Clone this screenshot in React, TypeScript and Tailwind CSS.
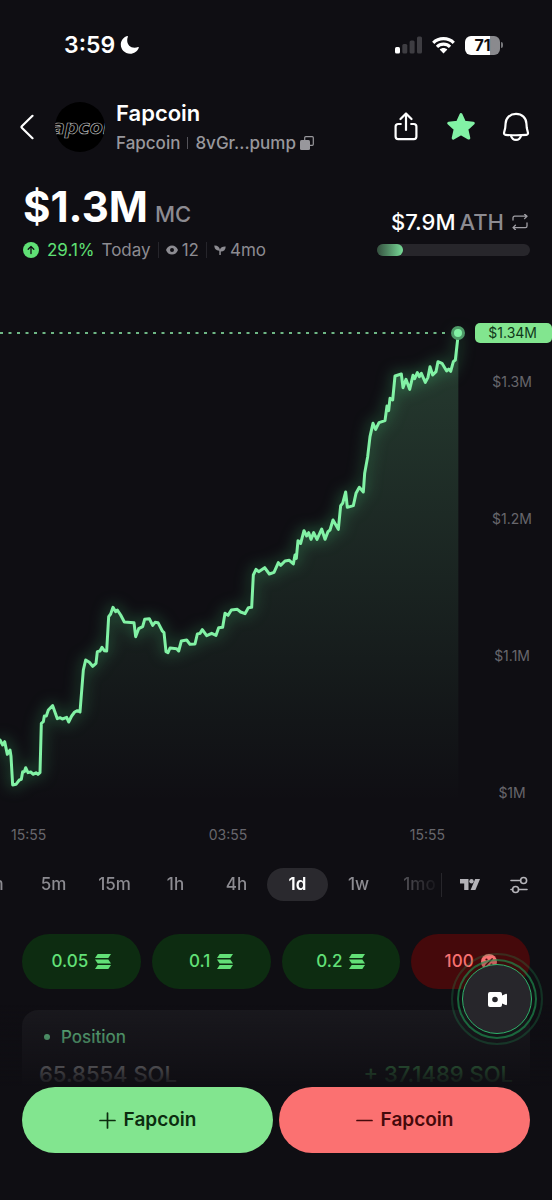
import React, { useState } from "react";

// one point per sample, viewBox units of the chart (1377 x 1440)
const POINTS: [number, number][] = [
  [0, 1251], [8, 1266], [14, 1256], [22, 1294], [30, 1281], [33, 1300], [38, 1386], [48, 1384],
  [58, 1371], [64, 1369], [68, 1346], [73, 1346], [77, 1334], [84, 1349], [92, 1347], [100, 1354],
  [108, 1349], [114, 1354], [120, 1349], [124, 1201], [130, 1196], [133, 1179], [139, 1179],
  [145, 1161], [158, 1148], [172, 1187], [180, 1184], [187, 1188], [200, 1183], [206, 1197],
  [215, 1179], [224, 1167], [232, 1163], [240, 1167], [250, 1041], [257, 1011], [268, 1018],
  [278, 1030], [288, 1021], [292, 986], [300, 984], [306, 973], [313, 983], [320, 984], [326, 881],
  [332, 873], [339, 853], [347, 866], [352, 861], [362, 876], [373, 897], [402, 899], [407, 941],
  [416, 917], [428, 911], [434, 889], [448, 887], [458, 907], [465, 898], [474, 899], [487, 924],
  [492, 929], [498, 986], [504, 989], [510, 975], [530, 977], [536, 984], [544, 954], [560, 951],
  [570, 964], [585, 963], [592, 933], [600, 931], [607, 920], [620, 938], [635, 931], [648, 937],
  [656, 914], [668, 913], [675, 871], [684, 877], [694, 861], [712, 859], [722, 867], [735, 872],
  [745, 854], [755, 853], [760, 756], [768, 739], [776, 746], [794, 734], [808, 753], [822, 748],
  [835, 719], [842, 727], [855, 714], [868, 712], [880, 723], [885, 696], [889, 706], [894, 653],
  [902, 661], [912, 623], [920, 639], [926, 629], [933, 649], [941, 629], [951, 649], [965, 618],
  [975, 649], [984, 626], [990, 621], [999, 591], [1015, 619], [1022, 548], [1028, 541],
  [1037, 507], [1042, 553], [1060, 548], [1068, 511], [1078, 493], [1090, 507], [1094, 451],
  [1103, 401], [1110, 341], [1119, 301], [1127, 319], [1137, 299], [1155, 293], [1161, 249],
  [1166, 263], [1170, 226], [1178, 231], [1185, 159], [1204, 153], [1209, 194], [1218, 169],
  [1229, 199], [1239, 157], [1244, 167], [1252, 149], [1258, 161], [1264, 151], [1276, 178],
  [1284, 163], [1290, 131], [1298, 156], [1308, 146], [1314, 116], [1326, 121], [1340, 144],
  [1346, 138], [1352, 145], [1360, 116], [1366, 111], [1375, 31],
];

const LINE = "M" + POINTS.map((p) => p.join(" ")).join("L");
const AREA = LINE + "L1375 1440L0 1440Z";

const PRICES = ["$1.3M", "$1.2M", "$1.1M", "$1M"];
const TIMES = ["15:55", "03:55", "15:55"];
const FRAMES = ["1m", "5m", "15m", "1h", "4h", "1d", "1w", "1mo"];
const BUY_AMOUNTS = ["0.05", "0.1", "0.2"];

const SolanaIcon = () => (
  <svg viewBox="0 0 16 15" className="h-[15px] w-4" fill="currentColor" aria-hidden="true">
    <path d="M2.700 0H16l-2.700 4H0z" />
    <path d="M0 5.500h13.300L16 9.500H2.700z" />
    <path d="M2.700 11H16l-2.700 4H0z" />
  </svg>
);

const StatusBar = () => (
  <div className="flex h-[90px] items-center justify-between pr-[49px] pl-16">
    <div className="flex items-center gap-[5px]">
      <span className="text-[23px] font-semibold leading-7">3:59</span>
      <svg viewBox="0 0 20 20" className="size-5" fill="currentColor" aria-hidden="true">
        <path d="M7.200 1.100c.5-.2.9.2.7.7-.5 1.100-.7 2.300-.7 3.500 0 4.600 3 7.400 7.400 7.400 1.200 0 2.400-.2 3.500-.7.5-.2.9.2.7.7-1.300 3.600-4.700 6-8.700 6C4.800 18.700.800 14.800.800 9.600c0-4 2.600-7.200 6.400-8.500z" />
      </svg>
    </div>
    <div className="flex items-center gap-[10px]">
      <svg viewBox="0 0 27 18" className="h-[18px] w-[27px]" aria-hidden="true">
        <rect x="0" y="11" width="5" height="6.500" rx="1.500" fill="#fff" />
        <rect x="7.300" y="8" width="5" height="9.500" rx="1.500" fill="#3e3d42" />
        <rect x="14.600" y="4.500" width="5" height="13" rx="1.500" fill="#3e3d42" />
        <rect x="22" y="0.500" width="5" height="17" rx="1.500" fill="#3e3d42" />
      </svg>
      <svg viewBox="0 0 24 18" className="h-[18px] w-[23px]" fill="none" stroke="#fff" strokeWidth="3.300" aria-hidden="true">
        <path d="M1.300 6.700C7 .9 17 .9 22.700 6.700" />
        <path d="M5.200 10.900c3.700-3.800 9.900-3.800 13.600 0" />
        <path d="M12 17.800 8 13.800c2.300-2.100 5.700-2.100 8 0z" fill="#fff" stroke="none" />
      </svg>
      <div className="flex items-center gap-px">
        <div className="flex h-[19px] w-[35px] items-center justify-center rounded-md bg-linear-to-r from-white from-70% to-[#8a8a8e] to-70% text-base font-bold text-[#0f0e13]">
          71
        </div>
        <div className="h-[6px] w-[2px] rounded-r-full bg-[#77777b]" />
      </div>
    </div>
  </div>
);

const Header: React.FC = () => {
  const [starred, setStarred] = useState(true);

  return (
    <header className="flex h-[73px] items-center justify-between pr-[22px] pl-5">
      <div className="flex items-center">
        <button aria-label="Back" className="w-[35px]">
          <svg viewBox="0 0 14 26" className="h-[26px] w-[14px]" fill="none" stroke="currentColor" strokeWidth="2.200" strokeLinecap="round" strokeLinejoin="round">
            <path d="M12.500 1.800 1.800 12.200a1.100 1.100 0 0 0 0 1.600L12.500 24.200" />
          </svg>
        </button>
        <svg viewBox="0 0 50 50" className="size-[50px] rounded-full bg-black" aria-hidden="true">
          <text x="-3" y="32" fill="#000" stroke="#b8b8b8" strokeWidth="0.700" className="font-['DejaVu_Sans',sans-serif] text-[19px] font-bold italic">
            apcoi
          </text>
        </svg>
        <div className="ml-[11px]">
          <h1 className="text-[22px] font-semibold leading-7">Fapcoin</h1>
          <div className="mt-1 flex items-center text-[17px] font-medium leading-6 text-[#98979c]">
            <span>Fapcoin</span>
            <span className="mx-[7px] h-3 w-px bg-[#55545a]" />
            <button aria-label="Copy address" className="flex items-center gap-1">
              8vGr...pump
              <svg viewBox="0 0 14 14" className="size-[14px]" aria-hidden="true">
                <rect x="4.700" y="0.700" width="8.600" height="8.600" rx="1" fill="none" stroke="currentColor" strokeWidth="1.200" />
                <rect x="0" y="4" width="10" height="10" rx="1.500" fill="currentColor" />
              </svg>
            </button>
          </div>
        </div>
      </div>
      <div className="flex items-center gap-[26px]">
        <button aria-label="Share">
          <svg viewBox="0 0 28 30" className="h-[30px] w-7" fill="none" stroke="currentColor" strokeWidth="2.200" strokeLinecap="round" strokeLinejoin="round">
            <path d="M14 18V1.500M8.500 7 14 1.500 19.500 7" />
            <path d="M8.800 12H6.200A2.600 2.600 0 0 0 3.600 14.600v10a2.600 2.600 0 0 0 2.600 2.600h15.600a2.600 2.600 0 0 0 2.600-2.600v-10a2.600 2.600 0 0 0-2.600-2.600h-2.600" />
          </svg>
        </button>
        <button aria-label="Favorite" aria-pressed={starred} onClick={() => setStarred(!starred)}>
          <svg
            viewBox="0 0 30 30"
            className={`size-[30px] ${starred ? "fill-[#82f2a5]" : "fill-none"} stroke-[#82f2a5]`}
            strokeWidth="3"
            strokeLinejoin="round"
          >
            <path d="M15 2.600l3.500 7.700 8.800.9-6.500 6 2 8.900L15 21.800l-7.800 4.300 2-8.900-6.500-6 8.800-.9z" />
          </svg>
        </button>
        <button aria-label="Notifications">
          <svg viewBox="0 0 28 30" className="h-[30px] w-7" fill="none" stroke="currentColor" strokeWidth="2.200" strokeLinecap="round" strokeLinejoin="round">
            <path d="M14 1.800C8 1.800 3.700 6 3.600 11.500L3.200 16 2.100 20.600c-.3 1.200.4 2.100 1.500 2.200 6.900.6 13.900.6 20.800 0 1.100-.1 1.800-1 1.500-2.200L24.800 16l-.4-4.500C24.300 6 20 1.800 14 1.800z" />
            <path d="M9 23.700c.8 2.700 2.700 4.200 5 4.200s4.200-1.500 5-4.200" />
          </svg>
        </button>
      </div>
    </header>
  );
};

const Stats = () => (
  <section className="flex items-end justify-between pt-[19px] pr-[22px] pl-[23px]">
    <div>
      <div className="flex items-baseline gap-[7px]">
        <span className="text-[42px] font-bold leading-[50px]">$1.3M</span>
        <span className="text-[22px] font-medium text-[#8c8b91]">MC</span>
      </div>
      <div className="mt-[6px] flex items-center text-[17px] leading-6 text-[#8c8b91]">
        <svg viewBox="0 0 16 16" className="mr-2 size-4" aria-hidden="true">
          <circle cx="8" cy="8" r="8" fill="#5fe075" />
          <path d="M8 11.500v-7M5.200 7.200 8 4.400l2.800 2.800" fill="none" stroke="#0f0e13" strokeWidth="1.300" strokeLinecap="round" strokeLinejoin="round" />
        </svg>
        <span className="mr-[7px] text-[#5fe075]">29.1%</span>
        <span>Today</span>
        <span className="mx-[7px] h-4 w-px bg-[#26252b]" />
        <svg viewBox="0 0 12 10" className="mr-1 h-[10px] w-3" fill="currentColor" fillRule="evenodd" aria-hidden="true">
          <path d="M6 .5C3.200.5 1.200 2 0 5c1.200 3 3.200 4.500 6 4.500S10.800 8 12 5C10.800 2 8.800.5 6 .5zM6 3a2 2 0 1 1 0 4 2 2 0 0 1 0-4z" />
        </svg>
        <span>12</span>
        <span className="mx-[7px] h-4 w-px bg-[#26252b]" />
        <svg viewBox="0 0 12 12" className="mr-1 size-3" fill="currentColor" aria-hidden="true">
          <path d="M.3 1.500C3.500 1.300 5.600 3 5.900 5.700 6.600 3.400 8.600 2.300 11.700 2.500c0 3-1.700 5-4.900 5V11H5.300V6.700C2 6.700.3 4.600.3 1.500z" />
        </svg>
        <span>4mo</span>
      </div>
    </div>
    <div className="w-[153px]">
      <div className="flex items-center justify-end text-[22px] font-medium leading-7">
        <span>$7.9M</span>
        <span className="ml-1 text-[#8c8b91]">ATH</span>
        <svg viewBox="0 0 16 16" className="mr-[2px] ml-2 size-4 shrink-0 text-[#a09fa5]" fill="none" stroke="currentColor" strokeWidth="1.300" strokeLinecap="round" strokeLinejoin="round" aria-hidden="true">
          <path d="M1 6V3.800A1.600 1.600 0 0 1 2.600 2.200H15M12.600.2 15 2.200l-2.400 2.400" />
          <path d="M15 9v3a1.600 1.600 0 0 1-1.600 1.600H1M3.400 11.200 1 13.600l2.400 2.200" />
        </svg>
      </div>
      <div className="mt-2 mb-[6px] h-3 rounded-full bg-[#27262b]">
        <div className="h-3 w-1/6 rounded-full bg-linear-to-r from-[#34503f] to-[#78dc98]" />
      </div>
    </div>
  </section>
);

const Chart = () => (
  <section className="mt-[61px]">
    <div className="flex">
      <div className="relative h-[480px] flex-1">
        <svg viewBox="0 0 1377 1440" preserveAspectRatio="none" className="h-full w-full overflow-visible" aria-hidden="true">
          <defs>
            <linearGradient id="area" x1="0" y1="0" x2="0" y2="1">
              <stop offset="0" stopColor="#82f2a5" stopOpacity="0.200" />
              <stop offset="1" stopColor="#82f2a5" stopOpacity="0" />
            </linearGradient>
          </defs>
          <path d={AREA} fill="url(#area)" />
          <path d="M0 30H1350" stroke="#8ff0ac" strokeWidth="1.500" strokeDasharray="3 5.500" vectorEffect="non-scaling-stroke" />
          <path
            d={LINE}
            fill="none"
            stroke="#82f2a5"
            strokeWidth="3"
            strokeLinejoin="round"
            strokeLinecap="round"
            vectorEffect="non-scaling-stroke"
            className="drop-shadow-[0_0_22px_#4ade8099]"
          />
        </svg>
        <span className="absolute top-[3px] -right-[6px] size-[14px] rounded-full border-[3px] border-[#4e9a68] bg-[#82f2a5]" />
      </div>
      <div className="flex w-[93px] flex-col items-end text-sm leading-5 text-[#67666c]">
        <span className="w-[77px] rounded-[5px] bg-[#82e58f] pr-[15px] text-right text-[#10381a]">$1.34M</span>
        <div className="mt-[29px] flex flex-col gap-[117px] pr-5 text-center">
          {PRICES.map((price) => (
            <span key={price}>{price}</span>
          ))}
        </div>
      </div>
    </div>
    <div className="mt-[22px] flex justify-between pr-[107px] pl-[11px] text-sm leading-5 text-[#67666c]">
      {TIMES.map((time, i) => (
        <span key={i}>{time}</span>
      ))}
    </div>
  </section>
);

const Timeframes: React.FC = () => {
  const [active, setActive] = useState("1d");

  return (
    <nav className="mt-[23px] flex items-center text-[17px] font-medium text-[#8c8b91]">
      <div className="flex-1 overflow-hidden mask-r-from-84%">
        <div className="-ml-[38px] flex">
          {FRAMES.map((frame) => (
            <button
              key={frame}
              onClick={() => setActive(frame)}
              className={`h-[33px] w-[61px] shrink-0 rounded-full ${
                active === frame ? "bg-[#2a292e] font-semibold text-white" : ""
              }`}
            >
              {frame}
            </button>
          ))}
        </div>
      </div>
      <div className="flex h-6 items-center border-l border-[#27262b] pr-[24px] pl-[18px]">
        <button aria-label="TradingView" className="mr-[30px]">
          <svg viewBox="0 0 20 11" className="h-[11px] w-5" fill="#b4b3b8">
            <path d="M0 0h8.500v11H4.200V4.600H0z" />
            <circle cx="11.500" cy="2.200" r="2.200" />
            <path d="M15.200 0H20l-4.600 11h-4.800z" />
          </svg>
        </button>
        <button aria-label="Chart settings">
          <svg viewBox="0 0 18 18" className="size-[18px]" fill="none" stroke="#b4b3b8" strokeWidth="1.600" strokeLinecap="round">
            <path d="M1 4.500h9.500M1 13.500h1.500M8.500 13.500H17" />
            <circle cx="13.600" cy="4.500" r="3" />
            <circle cx="5.600" cy="13.500" r="3" />
          </svg>
        </button>
      </div>
    </nav>
  );
};

const QuickTrade = () => (
  <section className="mt-[33px] grid grid-cols-4 gap-[11px] px-[22px] text-[17px] font-medium">
    {BUY_AMOUNTS.map((amount) => (
      <button key={amount} className="flex h-[55px] items-center justify-center gap-[7px] rounded-full bg-[#0d2c11] text-[#62e077]">
        {amount}
        <SolanaIcon />
      </button>
    ))}
    <button className="flex h-[55px] items-center justify-center gap-[7px] rounded-full bg-[#45090b] text-[#f87171]">
      100
      <svg viewBox="0 0 16 16" className="size-4" aria-hidden="true">
        <circle cx="8" cy="8" r="8" fill="currentColor" />
        <path d="M4.800 11.200l6.400-6.400" stroke="#45090b" strokeWidth="1.300" strokeLinecap="round" />
        <circle cx="5.500" cy="5.500" r="1.100" fill="#45090b" />
        <circle cx="10.500" cy="10.500" r="1.100" fill="#45090b" />
      </svg>
    </button>
  </section>
);

const PositionCard = () => (
  <section className="mx-[22px] mt-[21px] rounded-2xl bg-[#1a191e] px-[17px] pt-[15px] pb-[86px]">
    <h2 className="flex items-center gap-[11px] pl-[5px] text-[17px] font-medium leading-6 text-[#70d896]">
      <span className="size-[6px] rounded-full bg-current" />
      Position
    </h2>
    <div className="mt-[11px] flex justify-between text-[22px] font-medium leading-7">
      <span>65.8554 SOL</span>
      <span className="text-[#62e077]">+ 37.1489 SOL</span>
    </div>
  </section>
);

const RecordButton = () => (
  <button
    aria-label="Record"
    className="fixed right-[9px] bottom-[155px] flex size-[92px] items-center justify-center rounded-full border-2 border-[#1f9d57]/25"
  >
    <span className="flex size-20 items-center justify-center rounded-full border-2 border-[#1f9d57]/60 bg-[#0f1a14]/20">
      <span className="flex size-[70px] items-center justify-center rounded-full border border-[#2fb36b] bg-[#27262b]">
        <svg viewBox="0 0 19 15" className="h-[15px] w-[19px]" fill="#fff" fillRule="evenodd" aria-hidden="true">
          <path d="M2 0h10a2 2 0 0 1 2 2v1.500L17.600 2c.8-.4 1.400 0 1.400.7v9.600c0 .7-.6 1.100-1.400.7L14 11.500V13a2 2 0 0 1-2 2H2a2 2 0 0 1-2-2V2a2 2 0 0 1 2-2zM7 4.700a2.800 2.800 0 1 0 0 5.600 2.800 2.800 0 0 0 0-5.600z" />
        </svg>
      </span>
    </span>
  </button>
);

const TradeBar = () => (
  <div className="fixed inset-x-0 bottom-0">
    <div className="h-[82px] bg-linear-to-b from-transparent to-[#0f0e13]" />
    <div className="grid grid-cols-2 gap-[6px] bg-[#0f0e13] px-[22px] pb-[47px] text-[19px] font-semibold">
      <button className="flex h-[66px] items-center justify-center gap-2 rounded-full bg-[#82e58f] text-[#0c2c0f]">
        <svg viewBox="0 0 17 17" className="size-[17px]" stroke="currentColor" strokeWidth="1.700" strokeLinecap="round" aria-hidden="true">
          <path d="M1 8.500h15M8.500 1v15" />
        </svg>
        Fapcoin
      </button>
      <button className="flex h-[66px] items-center justify-center gap-2 rounded-full bg-[#fb7171] text-[#45090b]">
        <svg viewBox="0 0 17 17" className="size-[17px]" stroke="currentColor" strokeWidth="1.700" strokeLinecap="round" aria-hidden="true">
          <path d="M1 8.500h15" />
        </svg>
        Fapcoin
      </button>
    </div>
  </div>
);

const App: React.FC = () => (
  <div className="min-h-screen bg-[#0f0e13] font-['Inter',sans-serif] text-white">
    <StatusBar />
    <Header />
    <main>
      <Stats />
      <Chart />
      <Timeframes />
      <QuickTrade />
      <PositionCard />
    </main>
    <TradeBar />
    <RecordButton />
  </div>
);

export default App;
